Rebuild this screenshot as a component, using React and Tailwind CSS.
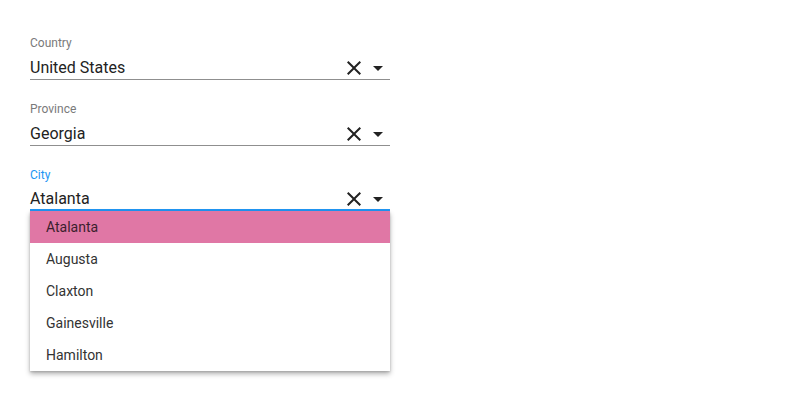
import React from "react";

const CloseIcon = () => (
  <svg width="24" height="24" viewBox="0 0 24 24" className="block">
    <path fill="#222" d="M19 6.41 17.59 5 12 10.59 6.41 5 5 6.41 10.59 12 5 17.59 6.41 19 12 13.41 17.59 19 19 17.59 13.41 12z" />
  </svg>
);

const ArrowIcon = () => (
  <svg width="24" height="24" viewBox="0 0 24 24" className="block">
    <path fill="#222" d="M7 10l5 5 5-5z" />
  </svg>
);

function Field({ label, value, active }) {
  return (
    <div className="w-[360px]">
      <div className={`text-[12px] leading-[14px] ${active ? "text-[#2196f3]" : "text-[#7a7a7a]"}`}>{label}</div>
      <div
        className={`mt-[7px] flex items-center ${
          active ? "h-[22px] border-b-2 border-[#2196f3]" : "h-[23px] border-b border-[#8f8f8f]"
        }`}
      >
        <div className="flex-1 text-[16px] text-[#222]">{value}</div>
        <CloseIcon />
        <ArrowIcon />
      </div>
    </div>
  );
}

export default function App() {
  const items = ["Atalanta", "Augusta", "Claxton", "Gainesville", "Hamilton"];
  return (
    <div className="w-[800px] h-[400px] bg-white pl-[30px] pt-[36px]" style={{ fontFamily: "Roboto, 'Noto Sans', sans-serif" }}>
      <div className="flex flex-col gap-[22px]">
        <Field label="Country" value="United States" />
        <Field label="Province" value="Georgia" />
        <div>
          <Field label="City" value="Atalanta" active />
          <div className="w-[360px] bg-white shadow-[0_3px_5px_rgba(0,0,0,0.3),0_1px_2px_rgba(0,0,0,0.15)]">
            {items.map((it, i) => (
              <div
                key={it}
                className={`h-8 flex items-center pl-4 pt-[1px] text-[14px] ${
                  i === 0 ? "bg-[#e077a5] text-[#3b1f2e]" : "text-[#333]"
                }`}
              >
                {it}
              </div>
            ))}
          </div>
        </div>
      </div>
    </div>
  );
}
